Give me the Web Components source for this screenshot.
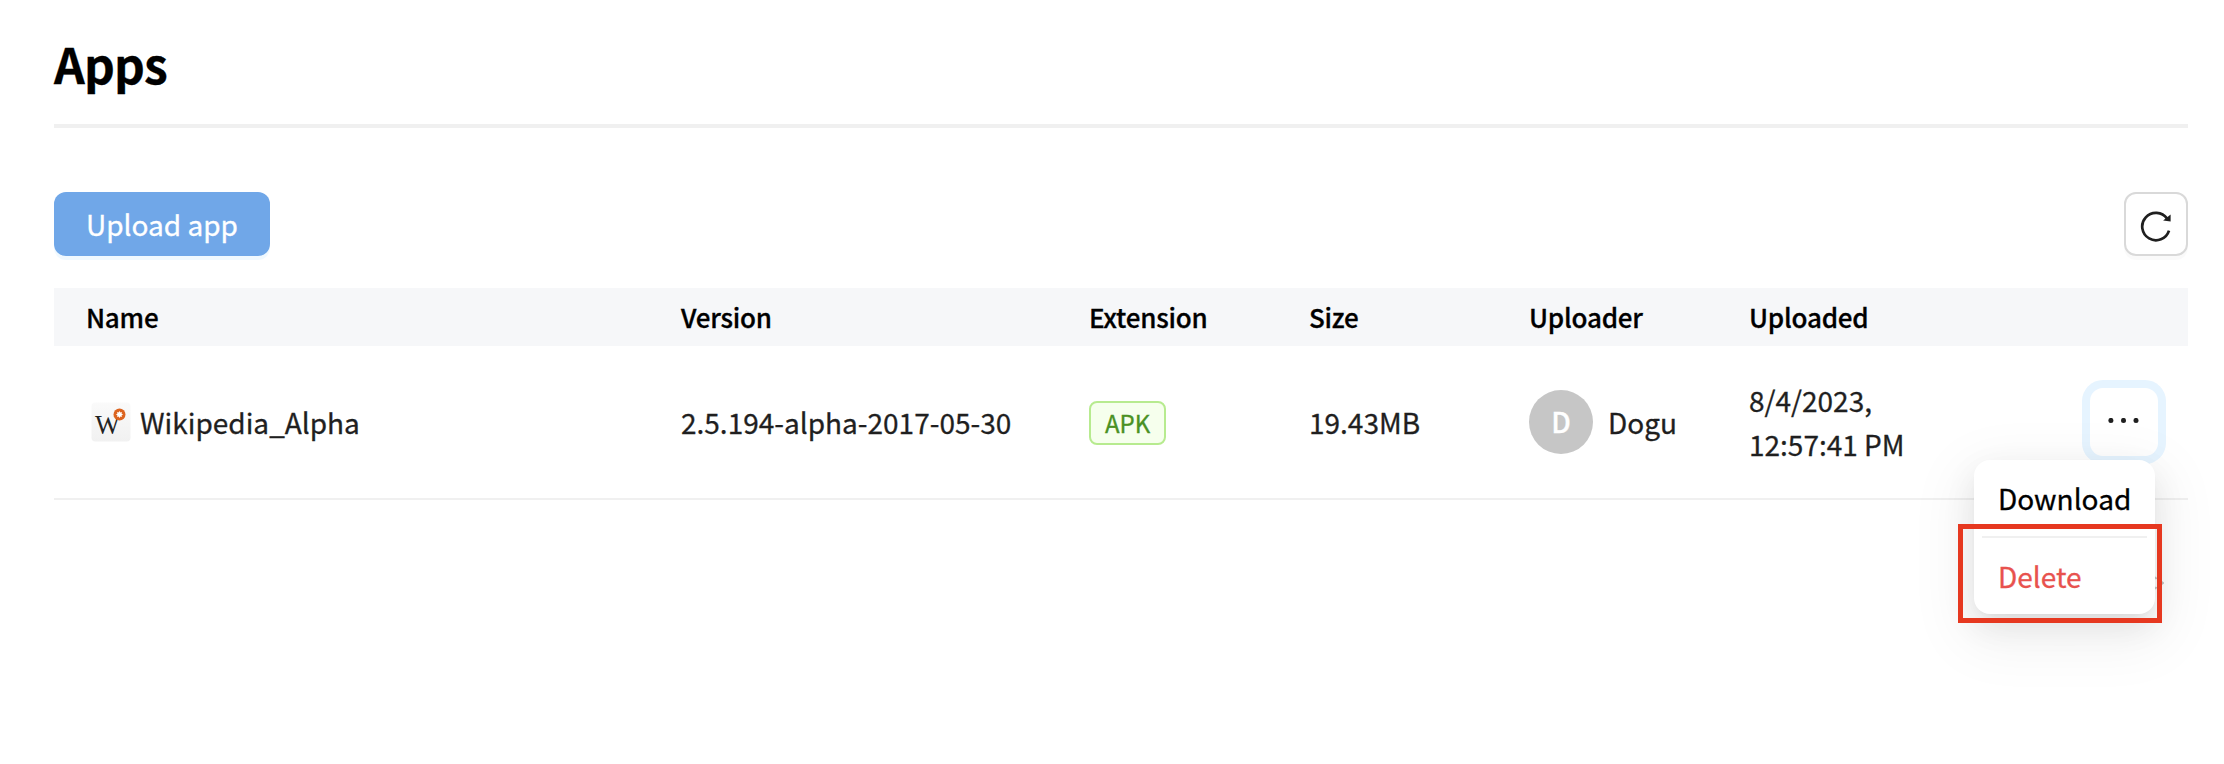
<!DOCTYPE html>
<html lang="en">
<head>
<meta charset="utf-8">
<title>Apps</title>
<style>
html, body { margin: 0; background: #fff; }
body { height: 764px; overflow: hidden; font-family: "Noto Sans CJK KR", "Noto Sans", sans-serif; font-size: 28px; line-height: 44px; color: #1f1f1f; -webkit-text-stroke: .3px currentColor; }
</style>
</head>
<body>
<apps-page></apps-page>
<script>
const define = (name, html) => customElements.define(name, class extends HTMLElement {
  constructor() {
    super();
    const t = document.createElement('template');
    t.innerHTML = html;
    this.attachShadow({ mode: 'open' }).append(t.content.cloneNode(true));
  }
});

define('page-title', `<style>
:host { display: block; height: 90px; border-bottom: 4px solid #f0f0f0; }
h1 { margin: 0; font-size: 48px; line-height: 58px; font-weight: 700; letter-spacing: -.8px; color: #000; }
</style><h1><slot></slot></h1>`);

define('primary-button', `<style>
:host { display: block; }
button { display: block; box-sizing: border-box; width: 216px; height: 64px; padding: 0; border: 0; border-radius: 12px; background: #70a7e8; box-shadow: 0 4px 0 rgba(5,145,255,.06); color: #fff; font: inherit; }
</style><button><slot></slot></button>`);

define('refresh-button', `<style>
:host { display: block; }
button { display: flex; align-items: center; justify-content: center; box-sizing: border-box; width: 64px; height: 64px; padding: 0; border: 2px solid #d9d9d9; border-radius: 12px; background: #fff; box-shadow: 0 4px 0 rgba(0,0,0,.02); }
svg { display: block; margin-top: 4px; }
</style><button aria-label="Refresh"><svg width="32" height="32" viewBox="0 0 32 32"><path d="M29 20.6A13.7 13.7 0 1 1 27.1 8.6" fill="none" stroke="#1f1f1f" stroke-width="2.7"/><path d="M30.6 4.6V11.5L23.1 10.4Z" fill="#1f1f1f"/></svg></button>`);

const columns = 'display: grid; grid-template-columns: 595px 408px 220px 220px 220px 188px 1fr; padding-left: 32px; box-sizing: border-box; align-items: center;';

define('table-head', `<style>
:host { ${columns} height: 58px; background: #f6f7f9; color: #000; font-size: 26px; font-weight: 500; letter-spacing: -.22px; }
</style><slot></slot>`);

define('table-row', `<style>
:host { ${columns} height: 154px; border-bottom: 2px solid #f0f0f0; }
</style><slot></slot>`);

define('app-name', `<style>
:host { display: flex; align-items: center; padding-left: 5px; gap: 9px; }
</style><svg width="40" height="40" viewBox="0 0 40 40">
<defs><linearGradient id="g" x1="0" y1="0" x2="0" y2="1"><stop stop-color="#fafafa"/><stop offset="1" stop-color="#f1f1f1"/></linearGradient></defs>
<rect x=".5" y=".5" width="39" height="39" rx="4" fill="url(#g)"/>
<text x="4" y="31.5" font-family="Liberation Serif, serif" font-size="28" textLength="25" lengthAdjust="spacingAndGlyphs" fill="#222">W</text>
<circle cx="28.5" cy="12.5" r="6" fill="#dc6420"/>
<path d="M28.5 9l.9 1.5 1.6-.5-.5 1.6 1.5.9-1.5.9.5 1.6-1.6-.5-.9 1.5-.9-1.5-1.6.5.5-1.6-1.5-.9 1.5-.9-.5-1.6 1.6.5Z" fill="#fff"/>
</svg><span><slot></slot></span>`);

define('file-tag', `<style>
:host { display: block; padding-top: 2px; }
span { display: inline-block; box-sizing: border-box; vertical-align: top; height: 44px; padding: 0 14px; border: 2px solid #b7eb8f; border-radius: 8px; background: #f6ffed; color: #4a9123; font-size: 24px; line-height: 40px; }
</style><span><slot></slot></span>`);

define('user-badge', `<style>
:host { display: flex; align-items: center; gap: 15px; }
i { display: block; width: 64px; height: 64px; border-radius: 50%; background: #c6c6c6; color: #fff; font-style: normal; font-weight: 500; text-align: center; line-height: 62px; }
</style><i><slot name="initial"></slot></i><span><slot></slot></span>`);

define('row-actions', `<style>
:host { display: flex; justify-content: flex-end; position: relative; padding-right: 30px; }
button { display: flex; align-items: center; justify-content: center; width: 68px; height: 68px; padding: 0; border: 0; border-radius: 13px; background: #fff; box-shadow: 0 0 0 8px #e6f4ff; }
svg { display: block; }
::slotted(*) { position: absolute; top: 72px; right: 33px; }
</style><button aria-label="More"><svg width="32" height="8" viewBox="0 0 32 8"><g fill="#1f1f1f"><circle cx="2.9" cy="2.4" r="2.5"/><circle cx="15.5" cy="2.4" r="2.5"/><circle cx="28" cy="2.4" r="2.5"/></g></svg></button><slot></slot>`);

define('action-menu', `<style>
:host { display: block; box-sizing: border-box; width: 181px; height: 154px; padding: 8px; border-radius: 16px; background: #fff; box-shadow: 0 12px 32px rgba(0,0,0,.08), 0 6px 12px -8px rgba(0,0,0,.12), 0 18px 56px 16px rgba(0,0,0,.05); }
hr { height: 2px; margin: 8px 0; border: 0; background: #f0f0f0; }
div { padding-left: 16px; line-height: 60px; color: #000; }
.danger { color: #e8524e; }
.mark { position: absolute; left: -16.5px; top: 64.4px; width: 204px; height: 98.5px; padding: 0; box-sizing: border-box; border: 5px solid #e63820; }
svg { position: absolute; left: 181px; top: 116px; }
</style><div><slot name="first"></slot></div><hr><div class="danger"><slot name="last"></slot></div>
<svg width="9" height="16" viewBox="0 0 9 16"><path d="M0 1l1.5 2M0 13l1.5-2M6 5.5l2 1.5-2 1.5" fill="none" stroke="#b5b5b5" stroke-width="2"/></svg><div class="mark"></div>`);

define('apps-page', `<style>
:host { display: block; padding: 34px 36px 0 54px; }
.bar { display: flex; justify-content: space-between; margin: 64px 0 32px; }
</style>
<page-title>Apps</page-title>
<div class="bar"><primary-button>Upload app</primary-button><refresh-button></refresh-button></div>
<table-head><span>Name</span><span>Version</span><span>Extension</span><span>Size</span><span>Uploader</span><span>Uploaded</span></table-head>
<table-row>
<app-name>Wikipedia_Alpha</app-name><span>2.5.194-alpha-2017-05-30</span><file-tag>APK</file-tag><span>19.43MB</span>
<user-badge><span slot="initial">D</span>Dogu</user-badge><span>8/4/2023, 12:57:41 PM</span>
<row-actions><action-menu><span slot="first">Download</span><span slot="last">Delete</span></action-menu></row-actions>
</table-row>`);
</script>
</body>
</html>
